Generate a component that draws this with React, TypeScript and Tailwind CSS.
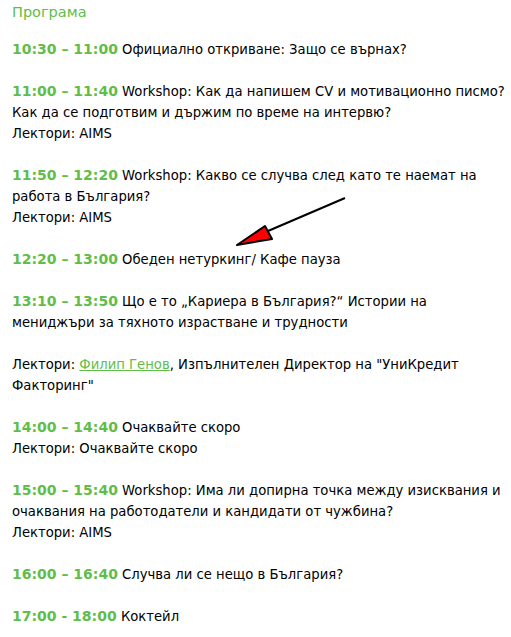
const green = "text-[#5fbd48]";

type Line = { time?: string; text?: React.ReactNode } | null;

function Time({ t }: { t: string }) {
  return <span className={`font-bold text-[14px] ${green}`}>{t}</span>;
}

const lines: Line[] = [
  { time: "10:30 – 11:00", text: " Официално откриване: Защо се върнах?" },
  null,
  { time: "11:00 – 11:40", text: " Workshop: Как да напишем CV и мотивационно писмо?" },
  { text: "Как да се подготвим и държим по време на интервю?" },
  { text: "Лектори: AIMS" },
  null,
  { time: "11:50 – 12:20", text: " Workshop: Какво се случва след като те наемат на" },
  { text: "работа в България?" },
  { text: "Лектори: AIMS" },
  null,
  { time: "12:20 – 13:00", text: " Обеден нетуркинг/ Кафе пауза" },
  null,
  { time: "13:10 – 13:50", text: " Що е то „Кариера в България?“ Истории на" },
  { text: "мениджъри за тяхното израстване и трудности" },
  null,
  {
    text: (
      <>
        Лектори:{" "}
        <a href="#" className={`${green} underline`}>
          Филип Генов
        </a>
        , Изпълнителен Директор на "УниКредит
      </>
    ),
  },
  { text: 'Факторинг"' },
  null,
  { time: "14:00 – 14:40", text: " Очаквайте скоро" },
  { text: "Лектори: Очаквайте скоро" },
  null,
  { time: "15:00 – 15:40", text: " Workshop: Има ли допирна точка между изисквания и" },
  { text: "очаквания на работодатели и кандидати от чужбина?" },
  { text: "Лектори: AIMS" },
  null,
  { time: "16:00 – 16:40", text: " Случва ли се нещо в България?" },
  null,
  { time: "17:00 - 18:00", text: " Коктейл" },
];

function Arrow() {
  return (
    <svg className="absolute left-0 top-0" width="511" height="637" viewBox="0 0 511 637">
      <line x1="345" y1="198" x2="268" y2="231" stroke="#000" strokeWidth="2" />
      <polygon points="237,245 265,226 272,239" fill="#ff0000" stroke="#000" strokeWidth="2" strokeLinejoin="round" />
    </svg>
  );
}

export default function App() {
  return (
    <div className="relative w-[511px] h-[637px] bg-white overflow-hidden font-['DejaVu_Sans',sans-serif] text-[13.2px] text-black">
      <div className="pl-3 pt-[2px]">
        <div className={`leading-[21px] text-[14.5px] ${green}`}>Програма</div>
        <div className="mt-[16px]">
          {lines.map((l, i) =>
            l ? (
              <div key={i} className="leading-[21px] h-[21px] whitespace-nowrap">
                {l.time && <Time t={l.time} />}
                {l.text}
              </div>
            ) : (
              <div key={i} className="h-[21px]" />
            )
          )}
        </div>
      </div>
      <Arrow />
    </div>
  );
}
